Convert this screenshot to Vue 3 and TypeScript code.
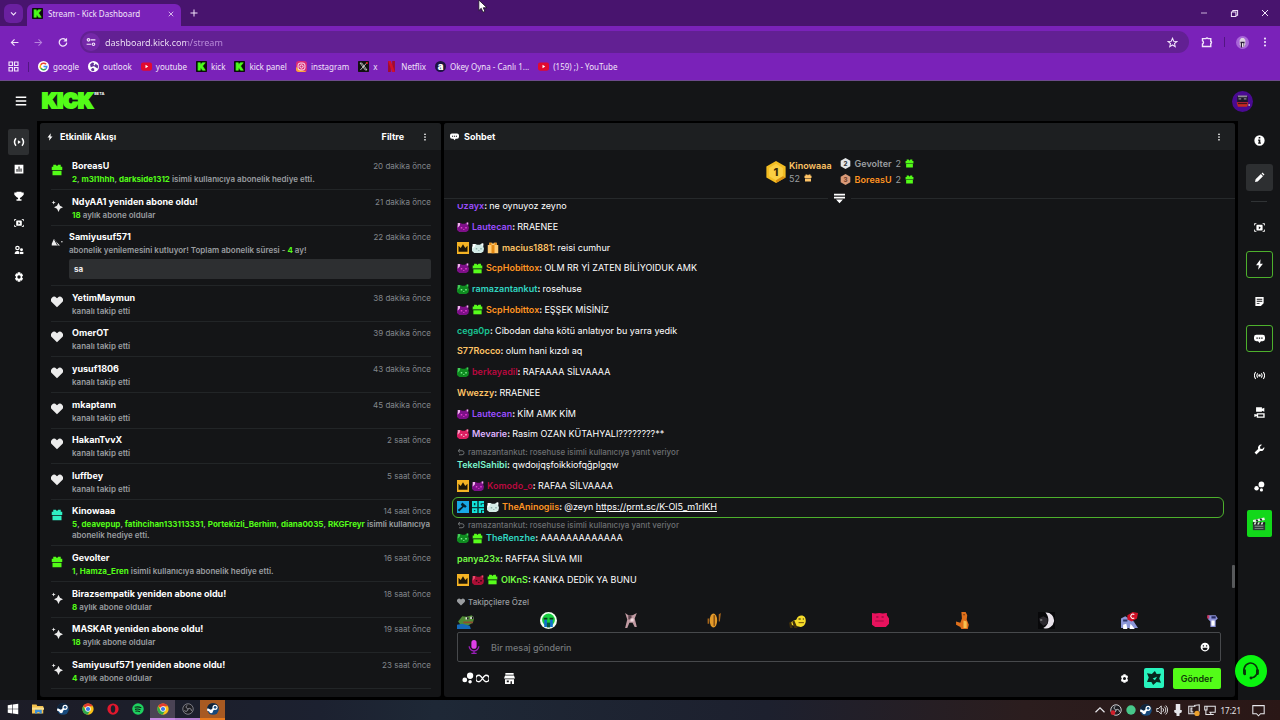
<script setup lang="ts">
import { defineComponent, h, ref } from 'vue'

const kickBadge =
  '<rect width="16" height="16" rx="1" fill="#0a0d0a"/><text x="8" y="13.2" text-anchor="middle" font-family="Inter, sans-serif" font-weight="900" font-size="14" fill="#4dfc1c" stroke="#4dfc1c" stroke-width="1.2">K</text>'

const steamMark =
  '<circle cx="8" cy="8" r="7.800" fill="#174a7c"/><path d="M.3 7A7.800 7.800 0 0 1 15.700 7L8 9z" fill="#10243c"/><path d="M.3 8.500 5.500 11 10.500 6" fill="none" stroke="#fff" stroke-width="3"/><circle cx="10.800" cy="5.800" r="3.400" fill="#fff"/><circle cx="10.800" cy="5.800" r="1.700" fill="#174a7c"/><circle cx="5.500" cy="11.200" r="2.300" fill="#fff"/>'

const chromeMark =
  '<circle cx="8" cy="8" r="7.500" fill="#fbc116"/><path d="M8 8 1.500 4.200A7.500 7.500 0 0 1 14.500 4.200H8z" fill="#e33b2e"/><path d="M1.500 4.200A7.500 7.500 0 0 0 7.500 15.500L11 9.700 8 8 4.700 9.700z" fill="#2da94f"/><circle cx="8" cy="8" r="3.700" fill="#fff"/><circle cx="8" cy="8" r="2.800" fill="#3b78e7"/>'

const cat = (body: string, light: string, eye: string): string =>
  `<path d="M1 2.500h4l1.500 1h4L13 2h2v4l1 3-1 4-3 1.500H3L0 12V7l1-2z" fill="${body}"/><path d="M1 2.500h3v3L1 9zM13 2h2v2.500h-2z" fill="${light}"/><path d="M5 8h2v2H5zM11 8h2v2h-2zM8 11h2v1H8z" fill="${eye}"/>`

const giftShape =
  '<path d="M3 1h3.500L8 3l1.500-2H13v2.500h2V8H1V3.500h2z"/><path d="M2 9h12v6H2z"/>'

const icons: Record<string, string> = {
  chevron: '<path d="M3.500 6 8 10.500 12.500 6" fill="none" stroke="currentColor" stroke-width="2"/>',
  up: '<path d="M2 11 8 5l6 6" fill="none" stroke="currentColor" stroke-width="1.600"/>',
  close: '<path d="m2 2 12 12M14 2 2 14" stroke="currentColor" stroke-width="2"/>',
  plus: '<path d="M8 1v14M1 8h14" stroke="currentColor" stroke-width="2"/>',
  minimize: '<path d="M2 8h12" stroke="currentColor" stroke-width="1.500"/>',
  restore: '<path d="M2.500 5.500h8v8h-8zM5 5V2.500h8.500V11H11" fill="none" stroke="currentColor" stroke-width="1.800"/>',
  back: '<path d="M15 8H2.500M8 2.500 2.500 8 8 13.500" fill="none" stroke="currentColor" stroke-width="2"/>',
  forward: '<path d="M1 8h12.500M8 2.500 13.500 8 8 13.500" fill="none" stroke="currentColor" stroke-width="1.800"/>',
  reload: '<path d="M13 5.200A6 6 0 1 0 14 9" fill="none" stroke="currentColor" stroke-width="2"/><path d="M14.500 1v6H8.500z" fill="currentColor"/>',
  tune: '<g fill="none" stroke="currentColor" stroke-width="1.800"><circle cx="4" cy="4.500" r="2"/><path d="M7.500 4.500H15M1 11.500h7.500"/><circle cx="12" cy="11.500" r="2"/></g>',
  star: '<path d="m8 1.800 1.800 4.300 4.700.4-3.600 3 1.100 4.600-4-2.500-4 2.500 1.100-4.600-3.600-3 4.700-.4z" fill="none" stroke="currentColor" stroke-width="1.500"/>',
  puzzle: '<path d="M2 3.500h4.500a1.800 1.800 0 0 1 3 0H13V7a1.800 1.800 0 0 1 0 3.200V14H2v-3.500a2.200 2.200 0 0 0 0-4z" fill="none" stroke="currentColor" stroke-width="1.900"/>',
  dots: '<circle cx="8" cy="2.500" r="1.700"/><circle cx="8" cy="8" r="1.700"/><circle cx="8" cy="13.500" r="1.700"/>',
  profile: '<circle cx="8" cy="8" r="8" fill="#a866d8"/><path d="M4.500 5 6.500 2.500h3l2 2.500v5l-1.500 3.500H6L4.500 10z" fill="#ddd3e0"/><path d="M5.500 7h5v2h-5zM6 9h1.500v5H6zM9 9h1v4H9z" fill="#2b1b38"/><path d="M7.500 9h1.500v4H7.500z" fill="#f3ecf5"/>',
  apps: '<path d="M1.500 1.500h5v5h-5zM9.500 1.500h5v5h-5zM1.500 9.500h5v5h-5zM9.500 9.500h5v5h-5z" fill="none" stroke="currentColor" stroke-width="1.700"/>',
  google: '<circle cx="8" cy="8" r="8" fill="#fff"/><g fill="none" stroke-width="2.200"><path d="M11.800 4.800A4.800 4.800 0 0 0 4 5.500" stroke="#ea4335"/><path d="M4 5.500a4.800 4.800 0 0 0 0 5" stroke="#fbbc05"/><path d="M4 10.500a4.800 4.800 0 0 0 7.300 1" stroke="#34a853"/><path d="M11.300 11.500A4.800 4.800 0 0 0 12.800 8H8" stroke="#4285f4"/></g>',
  outlook: '<circle cx="8" cy="8" r="8" fill="#fff"/><path d="M3 5l3-3 3 1-1 2 2 2-3 1-3 1zM11 4l4 3-1 4-3-2-2-1zM6 10l3 1v3l-2 1-3-2z" fill="#63319a"/>',
  youtube: '<rect y="2" width="16" height="12" rx="3" fill="#e3092f"/><path d="m6.500 5.500 4 2.500-4 2.500z" fill="#fff"/>',
  kick: kickBadge,
  instagram: '<rect width="16" height="16" rx="4" fill="#d92a78"/><path d="M0 8v4a4 4 0 0 0 4 4h8a4 4 0 0 0 3-1.400C8 14 2 12 0 8z" fill="#f8a43c"/><g fill="none" stroke="#fff" stroke-width="1.300"><rect x="3" y="3" width="10" height="10" rx="3"/><circle cx="8" cy="8" r="2.400"/></g>',
  x: '<rect width="16" height="16" rx="1" fill="#111"/><path d="M3 3h2.500l7.500 10h-2.500zM12.500 3 3.500 13" fill="none" stroke="#ddd" stroke-width="1.200"/><circle cx="13" cy="3" r="1.500" fill="#e22"/>',
  netflix: '<path d="M3 0h4v16H3zM9 0h4v16H9z" fill="#a30b2c"/><path d="M3 0h4l6 16H9z" fill="#d2102c"/>',
  okey: '<circle cx="8" cy="8" r="8" fill="#1d1442"/><text x="8" y="12.500" text-anchor="middle" font-family="Inter, sans-serif" font-weight="900" font-size="14" fill="#fff">a</text>',
  menu: '<path d="M1 3h14M1 8h14M1 13h14" stroke="currentColor" stroke-width="2"/>',
  avatar: '<circle cx="8" cy="8" r="8" fill="#4a0a92"/><path d="M4 4h8v4.500H4z" fill="#1b1728"/><path d="M4.500 3.500h7v1.200h-7zM5 5.500h2v1H5zM9 5.500h2v1H9z" fill="#8d8796"/><path d="M3.500 8.500h9l-1 3.500H4.500z" fill="#c52a1f"/><path d="M4.500 9.200h7v.8h-7z" fill="#3a1218"/><path d="M12.500 10h1.200v1.200h-1.200z" fill="#ccc"/>',
  bolt: '<path d="M9.500.5 3 9h4l-1 6.500L13 7H9z"/>',
  live: '<g fill="none" stroke="currentColor" stroke-width="2"><path d="M4 3a8 8 0 0 0 0 10M12 3a8 8 0 0 1 0 10"/></g><path d="m6.500 5.500 4 2.500-4 2.500z"/>',
  chart: '<path fill-rule="evenodd" d="M1 1h14v14H1zM4 8v4.500h1.700V8zM7.200 4v8.500h1.700V4zM10.400 7v5.500h1.700V7z"/>',
  trophy: '<path d="M4 1h8v1.500h3.500V6L12 9.500l-2.500 1.500v2H12v2.500H4V13h2.500v-2L4 9.500.5 6V2.500H4z"/>',
  capture: '<rect x="3.500" y="4" width="9" height="8.500" rx="1.500"/><path d="M.5 5V2.500h3M15.500 5V2.500h-3M.5 11v2.500h3M15.500 11v2.500h-3" fill="none" stroke="currentColor" stroke-width="1.400"/><path d="m7 6 3 2.200L7 10.500z" fill="#141517"/>',
  people: '<circle cx="5.500" cy="4.800" r="2.700" fill="none" stroke="currentColor" stroke-width="2"/><path d="M1 14.500c0-3.500 2-5 4.500-5 1.500 0 2.500.5 3 1.500v3.500z"/><circle cx="12" cy="7.500" r="2.300"/><path d="M9.500 14.500V11h5.500v3.500z"/>',
  gear: '<path fill-rule="evenodd" d="M6 .5h4l.4 2.200 2.100-.7 2 3.500L13 7v2l1.500 1.500-2 3.500-2.100-.7-.4 2.200H6l-.4-2.200-2.100.7-2-3.500L3 9V7L1.500 5.500l2-3.500 2.100.7zM8 5.300a2.700 2.700 0 1 0 0 5.400 2.700 2.700 0 0 0 0-5.400z"/>',
  gift: giftShape,
  sparkle: '<path d="M10 3.500 12 7.700 16 9.700 12 11.700 10 16 8 11.700 4 9.700 8 7.700zM3.500.5l.8 2 2 .8-2 .8-.8 2-.8-2-2-.8 2-.8z"/>',
  party: '<path d="M1 14v-2.500L4 5l3 4 5 5z"/><path d="m4.500 6 4.500 8" stroke="#141517" stroke-width="1.200"/><circle cx="14.500" cy="9" r="1"/>',
  heart: '<path d="M8 15 1.200 8.300a4.300 4.300 0 0 1 0-6 4.200 4.200 0 0 1 6 0l.8.8.8-.8a4.200 4.200 0 0 1 6 0 4.300 4.300 0 0 1 0 6z"/>',
  chat: '<path d="M3.500 2.500h9A3.500 3.500 0 0 1 16 6v2.500a3.500 3.500 0 0 1-3.500 3.500H10l-2 2.500L6 12H3.500A3.500 3.500 0 0 1 0 8.500V6a3.500 3.500 0 0 1 3.500-3.500z"/><path d="M3.500 6.500h2v2h-2zM7 6.500h2v2H7zM10.500 6.500h2v2h-2z" fill="#141517"/>',
  collapse: '<path d="M0 1h16v2.500H0zM0 5.500h16V8H0zM3 9.500h10L8 15z"/>',
  medal1: '<path d="M8 0l7 4v8l-7 4-7-4V4z" fill="#f3bd22"/><path d="M8 2l5 3v6l-5 3-5-3V5z" fill="#fbcf43"/><path d="M8 14l5-3 2 1-7 4z" fill="#d98f12"/><text x="8" y="11" text-anchor="middle" font-family="Inter, sans-serif" font-weight="800" font-size="8" fill="#3d2c08">1</text>',
  medal2: '<path d="M8 0l7 4v8l-7 4-7-4V4z" fill="#e3e5e7"/><text x="8" y="11.500" text-anchor="middle" font-family="Inter, sans-serif" font-weight="800" font-size="9" fill="#33373a">2</text>',
  medal3: '<path d="M8 0l7 4v8l-7 4-7-4V4z" fill="#d99a78"/><text x="8" y="11.500" text-anchor="middle" font-family="Inter, sans-serif" font-weight="800" font-size="9" fill="#70402a">3</text>',
  purpleCat: cat('#7d1088', '#f0b4ee', '#e33bd0'),
  whiteCat: cat('#d3ebe6', '#ffffff', '#8fb1ab'),
  greenCat: cat('#0f8a20', '#45cc5a', '#7bee8c'),
  pinkCat: cat('#dc1f62', '#f99ac1', '#ffc0d5'),
  redCat: cat('#a90f35', '#e8496c', '#2a0610'),
  crown: '<rect width="16" height="16" fill="#f5b323"/><path d="M2 5l3 3 3-5 3 5 3-3v8H2z" fill="#1b1508"/>',
  subGift: `<g fill="#57fc1c">${giftShape}</g><path d="M1 8h14v1H1z" fill="#1c6d10"/>`,
  goldGift: '<path d="M3 1h4l1 2 1-2h4v3h2v11H1V4h2z" fill="#ffca70"/><path d="M6 4h4v11H6zM3 1h3v3H3zM10 1h3v3h-3z" fill="#e58a14"/>',
  mod: '<rect width="16" height="16" fill="#18a8e8"/><path d="m7 2 6 5-2 2-2-1-6 6-2-2 6-5-2-2z" fill="#062232"/>',
  og: '<rect width="16" height="16" fill="#063b3d"/><path fill-rule="evenodd" d="M0 0h7v8H0zM2.500 2.500v3h2v-3zM9 0h7v3h-4.500v2.500H13V4h3v4H9zM0 9.500h7V16H0zM2.500 12v1.500h2V12zM9 9.500h7V12h-4v4H9zM13.500 13H16v3h-2.500z" fill="#13e6dc"/>',
  reply: '<path d="M6 2 2 5.500 6 9M2 5.500h8a4 4 0 0 1 0 8H4" fill="none" stroke="currentColor" stroke-width="2"/>',
  pepe: '<path d="M1 9 5 4l4 .5L14 3l2 3-1 4-5 3H4z" fill="#4f8b35"/><path d="M8 5h3v2H8zM12.500 4.500h3v2h-3z" fill="#dfe8d8"/><path d="M9.500 5H11v2H9.500zM14 4.500h1.500v2H14z" fill="#111"/><path d="M6 9h9v1.500H6z" fill="#8f4b32"/><path d="M0 12l5-1 7 2 1 3H0z" fill="#1569b8"/>',
  cry: '<circle cx="8" cy="8" r="8" fill="#f2fff0"/><circle cx="8" cy="7.500" r="6" fill="#16cf3f"/><path d="M4 7h2.500v7H4zM9.500 7H12v7H9.500z" fill="#126fd0"/><path d="M3.500 5.500h3.500V7H3.500zM9 5.500h3.500V7H9z" fill="#0b3d18"/><path d="M6.500 10h3v4.500h-3z" fill="#075b43"/>',
  catDance: '<path d="M2 1l3 2h4l4-2-2 5 2 8h-2l-2-4H6l-2 5H2l2-8z" fill="#c09aa2"/><path d="M5 3h3v4H5z" fill="#5b424b"/><path d="M7 6h3v3H7z" fill="#f3dce1"/>',
  coin: '<ellipse cx="7" cy="8" rx="3.500" ry="6.500" fill="#e29a29"/><path d="M7 3h1.500v10H7z" fill="#8a5214"/><path d="M1.500 6H3v5H1.500zM12 2l2-1-1 8h-1z" fill="#a7651a"/>',
  bee: '<path d="M1 12c0-3 4-4 6-5 1-4 6-5 8-2 2 4 0 9-4 9z" fill="#f6dc2a"/><path d="M3 9l2-1 3 7H5zM0 10l2-1 1.500 6H1z" fill="#40300b"/><path d="M9 6h2v1H9zM13 6h1v1h-1z" fill="#111"/><path d="M9 9.500h5v1H9z" fill="#7a5a0a"/>',
  pinkBlob: '<path d="M0 1l3 .5L7 1l3 .5L14 1v2l2 3v5l-3 3H3l-3-2z" fill="#e8125d"/><path d="M4 4h2v1.500H4zM9 4h2v1.500H9zM3 8h8v1H3z" fill="#9c0a42"/>',
  lizard: '<path d="M6 0h4l1.500 3-.5 4 2 5-1 4H6l-1-2-4-2V9l4 1 1.500-4z" fill="#e0701b"/><path d="M8 8l3 1v6H8z" fill="#f8c150"/><path d="M8 2h1v1H8z" fill="#301404"/>',
  moon: '<path d="M0 0h16v16H0z" fill="#08080a"/><path d="M7 .5a7.500 7.500 0 1 1-2 14.500C11 12 11 5 7 .5z" fill="#e8e2ea"/><path d="M1 6l4-2 4 2v5l-4 2-3-3z" fill="#2b282e"/><path d="M2 7h2v1H2z" fill="#aaa"/>',
  fan: '<path d="M0 6l4-2 8 5 4 6H0z" fill="#8c97d8"/><path d="M6 3l5-3 5 1-1 5-5 3-4-2z" fill="#cf1026"/><path d="M12.500 2.500a2 2 0 1 0 0 3" fill="none" stroke="#fff"/><path d="M2 12l3-1 1 5H2zM9 11l4 5H8z" fill="#fff"/><path d="M2 7h4v2H2z" fill="#2c3566"/>',
  robot: '<path d="M4 3h7l2 3-2 2v6H6V9L4 7z" fill="#8d92d8"/><path d="M7 8h3v5H7z" fill="#fff"/><path d="M3 3h2v3H3z" fill="#d03a68"/><path d="M7 4h4v2H7z" fill="#272b63"/>',
  mic: '<rect x="5" y="0" width="6" height="10" rx="3" fill="#df3fe8"/><path d="M2.500 7a5.500 5.500 0 0 0 11 0M8 12.500V15M5 15.300h6" fill="none" stroke="#9a1fb8" stroke-width="1.500"/>',
  smile: '<circle cx="8" cy="8" r="7"/><path d="M4.500 5h2v2h-2zM9.500 5h2v2h-2zM4 9h8a4 4 0 0 1-8 0z" fill="#141517"/>',
  points: '<circle cx="10.800" cy="5" r="4.200"/><circle cx="3.700" cy="10.500" r="3.200"/><circle cx="10.800" cy="13" r="2.300"/>',
  infinity: '<path d="M8 8C6 5 5 4 3.800 4a4 4 0 0 0 0 8C5 12 6 11 8 8s3-4 4.200-4a4 4 0 0 1 0 8C11 12 10 11 8 8z" fill="none" stroke="currentColor" stroke-width="1.600"/>',
  shop: '<path d="M2 0h12v2.500H2zM1.500 3.500h13L16 8H0z"/><path fill-rule="evenodd" d="M1.500 9h13v7h-3v-4H9.500v4h-8zM4 11v2.500h3V11z"/>',
  kicks: '<path d="M9 0l2 3.500L16 3l-2 5.500 2 5-5-1L7 16l-2-3.500L0 12.500 2 7.500 0 2.500l5.500 1z" fill="#07291f"/><path d="m6.500 8.500 5-2-2.500 4z" fill="#28f4be"/>',
  info: '<path fill-rule="evenodd" d="M8 .5a7.500 7.500 0 1 0 0 15 7.500 7.500 0 0 0 0-15zM6.800 3h2.400v2.200H6.800zM6 6.500h3.200V11H10v1.800H6V11h.8V8.200H6z"/>',
  pencil: '<path d="m1.500 14.500.8-4L10 3l3 3-7.600 7.700zM11 2l1.300-1.200 2.900 2.900L14 5z"/>',
  note: '<path fill-rule="evenodd" d="M2 1.500h12v9l-4 4H2zM4 4v1.300h8V4zM4 7v1.300h8V7zM4 10v1.300h4V10z"/>',
  signal: '<circle cx="8" cy="8" r="1.800"/><path d="M5.500 5a4.500 4.500 0 0 0 0 6M10.500 5a4.500 4.500 0 0 1 0 6M2.500 3a8 8 0 0 0 0 10M13.500 3a8 8 0 0 1 0 10" fill="none" stroke="currentColor" stroke-width="1.500"/>',
  cameras: '<path d="M3 .5h8.500v2L15 1v6l-3.500-1.500V7H3z"/><path fill-rule="evenodd" d="M4 9h11.500v6.500H4V13L.5 14.500V10L4 11zM6 10.800v2.900h7.500v-2.900z"/>',
  wrench: '<path d="M15 4.500 12 7.300 9.200 6.800 8.700 4 11.500 1A4.800 4.800 0 0 0 6 7.300L.8 12.500l2.700 2.700L8.700 10A4.800 4.800 0 0 0 15 4.500z"/>',
  clapper: '<path d="M1 6h14v9H1z" fill="#30383a"/><path d="M1 3.500 14 .5l.7 2.800L1.500 6z" fill="#e8f5e6"/><path d="m4 3 2-.5L7.500 5l-2 .4zM8.500 1.900l2-.5L12 4l-2 .4z" fill="#1b2320"/><path d="M1 6h14v2.500H1z" fill="#1a211e"/><path d="M3 6h2L4 8.500H2zM7 6h2L8 8.500H6zM11 6h2l-1 2.500h-2z" fill="#dbeed8"/><path d="M3 10h10v1H3zM3 12.500h10v1H3z" fill="#87968e"/>',
  headset: '<path d="M3 11.500A6 6.500 0 1 1 13.500 9c-.2 2.500-2 4.300-4.500 5" fill="none" stroke="#08340a" stroke-width="1.500"/><rect x="1" y="6.500" width="2.500" height="5" rx="1" fill="#08340a"/><rect x="12.500" y="6.500" width="2.500" height="5" rx="1" fill="#08340a"/><circle cx="8" cy="14.200" r="1.300" fill="#08340a"/>',
  windows: '<path d="M1 3l6-1v5.700H1zM7.800 1.900 15 1v6.700H7.800zM1 8.400h6V14l-6-1zM7.800 8.400H15V15l-7.200-1z" fill="#fff"/>',
  folder: '<path d="M0 2h6l1 2h8v10H0z" fill="#f3c04c"/><path d="M0 6h16v3H0z" fill="#fbe08d"/><path d="M4 9h9v5h-3v-2H7v2H4z" fill="#3c8fd6"/>',
  steam: steamMark,
  chrome: chromeMark,
  opera: '<path fill-rule="evenodd" d="M8 .5a7.500 7.500 0 1 0 0 15 7.500 7.500 0 0 0 0-15zm0 2.500c2 0 3 2.200 3 5s-1 5-3 5-3-2.200-3-5 1-5 3-5z" fill="#e0182d"/>',
  spotify: '<circle cx="8" cy="8" r="7.700" fill="#1ed05f"/><path d="M3.500 5.800c3-1 6.500-.7 9 .7M4 8.500c2.500-.8 5.500-.5 7.500.7M4.500 11c2-.5 4.500-.3 6 .6" fill="none" stroke="#0b2413" stroke-width="1.400"/>',
  obs: '<circle cx="8" cy="8" r="7" fill="#1d1d22" stroke="#9a9aa2" stroke-width="1"/><path d="M8 8c-3-1-3-4-1-5M8 8c2-2 5 0 4.500 2.500M8 8c0 3-3 4-5 2" fill="none" stroke="#9a9aa2" stroke-width="1.300"/>',
  obsRec: '<circle cx="8" cy="8" r="7" fill="#1d1d22" stroke="#cfcfd4" stroke-width="1.300"/><path d="M8 8c-3-1-3-4-1-5M8 8c2-2 5 0 4.500 2.500M8 8c0 3-3 4-5 2" fill="none" stroke="#cfcfd4" stroke-width="1.300"/><circle cx="4" cy="11.500" r="3.200" fill="#d01f2a"/>',
  greenDot: '<circle cx="8" cy="8" r="7.500" fill="#48c78a"/>',
  speaker: '<path d="M1 6h2.500L7 2.500v11L3.500 10H1zM9 5.500a3.500 3.500 0 0 1 0 5M11 3.500a6 6 0 0 1 0 9M13 2a8.500 8.500 0 0 1 0 12" fill="none" stroke="currentColor" stroke-width="1.200"/>',
  trayMic: '<path d="M5 0h6v9H5zM3 8h10v3l-3 1.500V16H6v-3.500L3 11z"/>',
  update: '<path d="M10 3H1v10h9M6 5.500H4v5h3M6 8H4M8 2l7-1v9" fill="none" stroke="currentColor" stroke-width="1.400"/><circle cx="12" cy="12.500" r="3.500" fill="#eda02c"/>',
  network: '<path d="M4 3h11v8H7M1 3h3v5H1zM2.500 8v6H6M9 11v3M6 14h7" fill="none" stroke="currentColor" stroke-width="1.400"/>',
  notify: '<path d="M1 2h14v10H10.500L8 14.500 5.500 12H1z" fill="none" stroke="currentColor" stroke-width="1.300"/>',
  cursor: '<path d="M1 0v13l3-2.800L6 15l2.500-1L6.500 9.500H11z" fill="#fff" stroke="#1a1022" stroke-width="1"/>',
}

const Icon = defineComponent({
  props: { name: { type: String, required: true }, size: { type: Number, default: 12 } },
  setup: (p) => () =>
    h('svg', {
      class: 'icon',
      viewBox: '0 0 16 16',
      width: p.size,
      height: p.size,
      fill: 'currentColor',
      'aria-hidden': 'true',
      innerHTML: icons[p.name],
    }),
})

interface Bookmark { icon: string; label: string }
const bookmarks: Bookmark[] = [
  { icon: 'google', label: 'google' },
  { icon: 'outlook', label: 'outlook' },
  { icon: 'youtube', label: 'youtube' },
  { icon: 'kick', label: 'kick' },
  { icon: 'kick', label: 'kick panel' },
  { icon: 'instagram', label: 'instagram' },
  { icon: 'x', label: 'x' },
  { icon: 'netflix', label: 'Netflix' },
  { icon: 'okey', label: 'Okey Oyna - Canlı 1...' },
  { icon: 'youtube', label: '(159) ;) - YouTube' },
]

interface Activity {
  icon: string
  tone?: string
  title: string
  time: string
  pre?: string
  marks?: string[]
  text: string
  note?: string
}
const follow = (title: string, time: string): Activity => ({ icon: 'heart', title, time, text: 'kanalı takip etti' })
const renew = (user: string, months: number, time: string): Activity => ({
  icon: 'sparkle',
  title: `${user} yeniden abone oldu!`,
  time,
  marks: [String(months)],
  text: ' aylık abone oldular',
})
const gifted = ' isimli kullanıcıya abonelik hediye etti.'
const activities: Activity[] = [
  { icon: 'gift', tone: 'green', title: 'BoreasU', time: '20 dakika önce', marks: ['2', 'm3l1hhh', 'darkside1312'], text: gifted },
  renew('NdyAA1', 18, '21 dakika önce'),
  {
    icon: 'party', tone: 'celebrate', title: 'Samiyusuf571', time: '22 dakika önce',
    pre: 'abonelik yenilemesini kutluyor! Toplam abonelik süresi - ', marks: ['4'], text: ' ay!', note: 'sa',
  },
  follow('YetimMaymun', '38 dakika önce'),
  follow('OmerOT', '39 dakika önce'),
  follow('yusuf1806', '43 dakika önce'),
  follow('mkaptann', '45 dakika önce'),
  follow('HakanTvvX', '2 saat önce'),
  follow('luffbey', '5 saat önce'),
  {
    icon: 'gift', tone: 'teal', title: 'Kinowaaa', time: '14 saat önce',
    marks: ['5', 'deavepup', 'fatihcihan133113331', 'Portekizli_Berhim', 'diana0035', 'RKGFreyr'], text: gifted,
  },
  { icon: 'gift', tone: 'green', title: 'Gevolter', time: '16 saat önce', marks: ['1', 'Hamza_Eren'], text: gifted },
  renew('Birazsempatik', 8, '18 saat önce'),
  renew('MASKAR', 18, '19 saat önce'),
  renew('Samiyusuf571', 4, '23 saat önce'),
]

interface Message { user: string; tone: string; text: string; badges?: string[]; reply?: string; link?: string }
const replied = 'ramazantankut: rosehuse isimli kullanıcıya yanıt veriyor'
const messages: Message[] = [
  { user: 'Uzayx', tone: 'violet', text: 'ne oynuyoz zeyno' },
  { user: 'Lautecan', tone: 'violet', text: 'RRAENEE', badges: ['purpleCat'] },
  { user: 'macius1881', tone: 'sand', text: 'reisi cumhur', badges: ['crown', 'whiteCat', 'goldGift'] },
  { user: 'ScpHobittox', tone: 'orange', text: 'OLM RR Yİ ZATEN BİLİYOIDUK AMK', badges: ['purpleCat', 'subGift'] },
  { user: 'ramazantankut', tone: 'teal', text: 'rosehuse', badges: ['greenCat'] },
  { user: 'ScpHobittox', tone: 'orange', text: 'EŞŞEK MİSİNİZ', badges: ['purpleCat', 'subGift'] },
  { user: 'cega0p', tone: 'jade', text: 'Cibodan daha kötü anlatıyor bu yarra yedik' },
  { user: 'S77Rocco', tone: 'sand', text: 'olum hani kızdı aq' },
  { user: 'berkayadil', tone: 'crimson', text: 'RAFAAAA SİLVAAAA', badges: ['greenCat'] },
  { user: 'Wwezzy', tone: 'sand', text: 'RRAENEE' },
  { user: 'Lautecan', tone: 'violet', text: 'KİM AMK KİM', badges: ['purpleCat'] },
  { user: 'Mevarie', tone: 'lilac', text: 'Rasim OZAN KÜTAHYALI????????**', badges: ['pinkCat'] },
  { user: 'TekelSahibi', tone: 'mint', text: 'qwdoıjqşfoikkiofqğplgqw', reply: replied },
  { user: 'Komodo_o', tone: 'crimson', text: 'RAFAA SİLVAAAA', badges: ['crown', 'purpleCat'] },
  { user: 'TheAninogiis', tone: 'orange', text: '@zeyn ', link: 'https://prnt.sc/K-Ol5_m1rlKH', badges: ['mod', 'og', 'whiteCat'] },
  { user: 'TheRenzhe', tone: 'teal', text: 'AAAAAAAAAAAAA', badges: ['greenCat', 'subGift'], reply: replied },
  { user: 'panya23x', tone: 'lime', text: 'RAFFAA SİLVA MII' },
  { user: 'OlKnS', tone: 'lime', text: 'KANKA DEDİK YA BUNU', badges: ['crown', 'redCat', 'subGift'] },
]

const emotes: string[] = ['pepe', 'cry', 'catDance', 'coin', 'bee', 'pinkBlob', 'lizard', 'moon', 'fan', 'robot']

const sideLinks = [
  { icon: 'live', label: 'Yayın' },
  { icon: 'chart', label: 'Analiz' },
  { icon: 'trophy', label: 'Başarılar' },
  { icon: 'capture', label: 'Klipler' },
  { icon: 'people', label: 'Topluluk' },
  { icon: 'gear', label: 'Ayarlar' },
]
const tools = [
  { icon: 'capture', label: 'Önizleme', kind: '' },
  { icon: 'bolt', label: 'Etkinlik akışı', kind: 'on' },
  { icon: 'note', label: 'Notlar', kind: '' },
  { icon: 'chat', label: 'Sohbet', kind: 'on' },
  { icon: 'signal', label: 'Yayın durumu', kind: '' },
  { icon: 'cameras', label: 'Kameralar', kind: '' },
  { icon: 'wrench', label: 'Moderasyon', kind: '' },
  { icon: 'points', label: 'Puanlar', kind: '' },
  { icon: 'clapper', label: 'Klip oluştur', kind: 'clip' },
]
const taskApps = [
  { icon: 'windows', state: '' },
  { icon: 'folder', state: '' },
  { icon: 'steam', state: '' },
  { icon: 'chrome', state: '' },
  { icon: 'opera', state: '' },
  { icon: 'spotify', state: '' },
  { icon: 'chrome', state: 'active' },
  { icon: 'obs', state: 'open' },
  { icon: 'steam', state: 'alert' },
]
const tray = ['up', 'obsRec', 'greenDot', 'steam', 'speaker', 'trayMic', 'update', 'network']

const address = ref('dashboard.kick.com/stream')
const draft = ref('')
</script>

<template>
  <div class="desktop">
    <header class="browser">
      <div class="tabstrip">
        <button class="tab-search" aria-label="Sekmelerde ara"><Icon name="chevron" :size="9" /></button>
        <div class="tab">
          <Icon name="kick" :size="11" />
          <span class="tab-title">Stream - Kick Dashboard</span>
          <button aria-label="Sekmeyi kapat"><Icon name="close" :size="6" /></button>
        </div>
        <button class="new-tab" aria-label="Yeni sekme"><Icon name="plus" :size="8" /></button>
        <div class="window-controls">
          <button aria-label="Küçült"><Icon name="minimize" :size="8" /></button>
          <button aria-label="Geri yükle"><Icon name="restore" :size="9" /></button>
          <button aria-label="Kapat"><Icon name="close" :size="8" /></button>
        </div>
      </div>
      <div class="toolbar">
        <div class="nav-buttons">
          <button aria-label="Geri"><Icon name="back" :size="9" /></button>
          <button class="dim" aria-label="İleri"><Icon name="forward" :size="9" /></button>
          <button aria-label="Yenile"><Icon name="reload" :size="10" /></button>
        </div>
        <div class="address">
          <button class="site-info" aria-label="Site bilgileri"><Icon name="tune" :size="10" /></button>
          <input v-model="address" type="text" aria-label="Adres" />
          <button aria-label="Yer işareti ekle"><Icon name="star" :size="11" /></button>
        </div>
        <div class="toolbar-end">
          <button aria-label="Uzantılar"><Icon name="puzzle" :size="12" /></button>
          <span class="bar" />
          <button aria-label="Profil"><Icon name="profile" :size="13" /></button>
          <button aria-label="Menü"><Icon name="dots" :size="10" /></button>
        </div>
      </div>
      <nav class="bookmarks" aria-label="Yer işaretleri">
        <button aria-label="Uygulamalar"><Icon name="apps" :size="11" /></button>
        <span class="bar" />
        <a v-for="b in bookmarks" :key="b.label" href="#"><Icon :name="b.icon" :size="11" />{{ b.label }}</a>
      </nav>
    </header>

    <div class="app">
      <header class="app-header">
        <button aria-label="Menüyü aç"><Icon name="menu" :size="12" /></button>
        <a class="logo" href="#"><span class="wordmark">KICK</span><sup>BETA</sup></a>
        <button class="account" aria-label="Hesap"><Icon name="avatar" :size="21" /></button>
      </header>

      <div class="workspace">
        <nav class="side" aria-label="Panel">
          <a v-for="(s, i) in sideLinks" :key="s.icon" href="#" :aria-label="s.label" :class="{ current: i === 0 }">
            <Icon :name="s.icon" :size="i === 0 ? 12 : 10" />
          </a>
        </nav>

        <section class="panel activity">
          <header class="panel-head">
            <Icon name="bolt" :size="8" />
            <h2>Etkinlik Akışı</h2>
            <button class="filter">Filtre</button>
            <button aria-label="Diğer"><Icon name="dots" :size="8" /></button>
          </header>
          <ul class="feed">
            <li v-for="a in activities" :key="a.title" :class="a.tone">
              <Icon :name="a.icon" :size="12" />
              <div class="feed-body">
                <div class="feed-top"><h3>{{ a.title }}</h3><time>{{ a.time }}</time></div>
                <p>{{ a.pre }}<template v-for="(m, i) in a.marks" :key="m"><template v-if="i">, </template><b>{{ m }}</b></template>{{ a.text }}</p>
                <div v-if="a.note" class="note">{{ a.note }}</div>
              </div>
            </li>
          </ul>
        </section>

        <section class="panel chat">
          <header class="panel-head">
            <Icon name="chat" :size="9" />
            <h2>Sohbet</h2>
            <button class="push" aria-label="Diğer"><Icon name="dots" :size="8" /></button>
          </header>

          <div class="leaders">
            <div class="first">
              <Icon name="medal1" :size="22" />
              <div>
                <strong>Kinowaaa</strong>
                <span class="count gold">52 <Icon name="gift" :size="8" /></span>
              </div>
            </div>
            <div class="others">
              <span><Icon name="medal2" :size="11" /><b>Gevolter</b> 2 <Icon class="gift" name="gift" :size="9" /></span>
              <span><Icon name="medal3" :size="11" /><b class="orange">BoreasU</b> 2 <Icon class="gift" name="gift" :size="9" /></span>
            </div>
          </div>
          <div class="fold">
            <button aria-label="Sıralamayı aç"><Icon name="collapse" :size="11" /></button>
          </div>

          <div class="scroller">
            <ol class="messages">
              <li v-for="(m, i) in messages" :key="i" :class="{ pinned: m.link }">
                <div v-if="m.reply" class="reply"><Icon name="reply" :size="8" />{{ m.reply }}</div>
                <div class="line">
                  <Icon v-for="(b, j) in m.badges" :key="j" :name="b" :size="b === 'subGift' ? 11 : 12" />
                  <p><b :class="m.tone">{{ m.user }}</b><i>: </i>{{ m.text }}<a v-if="m.link" href="#">{{ m.link }}</a></p>
                </div>
              </li>
            </ol>
            <span class="thumb" />
          </div>

          <form class="composer" @submit.prevent>
            <p class="mode"><Icon name="heart" :size="8" />Takipçilere Özel</p>
            <div class="emotes">
              <button v-for="e in emotes" :key="e" type="button" :aria-label="e"><Icon :name="e" :size="17" /></button>
            </div>
            <div class="field">
              <Icon name="mic" :size="14" />
              <input v-model="draft" type="text" placeholder="Bir mesaj gönderin" aria-label="Bir mesaj gönderin" />
              <button type="button" aria-label="İfadeler"><Icon name="smile" :size="10" /></button>
            </div>
            <div class="actions">
              <button type="button" aria-label="Puanlar"><Icon name="points" :size="12" /><Icon name="infinity" :size="13" /></button>
              <button type="button" aria-label="Mağaza"><Icon name="shop" :size="11" /></button>
              <button type="button" class="push" aria-label="Sohbet ayarları"><Icon name="gear" :size="9" /></button>
              <button type="button" class="kicks" aria-label="Kicks"><Icon name="kicks" :size="14" /></button>
              <button type="submit" class="send">Gönder</button>
            </div>
          </form>
        </section>

        <aside class="tools" aria-label="Araçlar">
          <button aria-label="Bilgi"><Icon name="info" :size="11" /></button>
          <button class="shaded" aria-label="Düzenle"><Icon name="pencil" :size="11" /></button>
          <hr />
          <button v-for="t in tools" :key="t.icon" :class="t.kind" :aria-label="t.label">
            <Icon :name="t.icon" :size="t.kind === 'clip' ? 14 : 11" />
          </button>
        </aside>
      </div>
      <button class="support" aria-label="Destek"><Icon name="headset" :size="18" /></button>
    </div>

    <footer class="taskbar">
      <button v-for="(t, i) in taskApps" :key="i" :class="t.state" :aria-label="t.icon"><Icon :name="t.icon" :size="12" /></button>
      <div class="tray">
        <Icon v-for="t in tray" :key="t" :name="t" :size="t === 'greenDot' ? 10 : 12" />
        <time>17:21</time>
        <button aria-label="Bildirimler"><Icon name="notify" :size="13" /></button>
      </div>
    </footer>
    <Icon class="cursor" name="cursor" :size="13" />
  </div>
</template>

<style>
html,
body {
  margin: 0;
  background: #000;
}
</style>

<style scoped>
.desktop {
  position: relative;
  display: flex;
  flex-direction: column;
  height: 100vh;
  overflow: hidden;
  color: #fff;
  font-family: Inter, "Liberation Sans", sans-serif;
  font-size: 9px;
}
h2, h3, p, ul, ol { margin: 0; padding: 0; list-style: none; }
button {
  display: flex;
  align-items: center;
  justify-content: center;
  padding: 0;
  border: 0;
  background: none;
  color: inherit;
  font: inherit;
}
a { color: inherit; text-decoration: none; }
.icon { flex: none; display: block; }
.push { margin-left: auto; }

.browser {
  background: #7a22b9;
  color: #f1e4fa;
  font-family: "Noto Sans", "Open Sans", sans-serif;
  border-bottom: 1px solid #6d4a8c;
}
.tabstrip { display: flex; height: 26px; background: #48146e; }
.tab-search {
  width: 19px;
  height: 19px;
  margin: 4px 4px 0;
  border-radius: 6px;
  background: #6a20a0;
}
.tab {
  display: flex;
  align-items: center;
  gap: 5px;
  width: 142px;
  margin-top: 4px;
  padding: 0 7px 3px 5px;
  border-radius: 6px 6px 0 0;
  background: #7a22b9;
}
.tab-title { flex: 1; font-size: 8px; }
.new-tab { width: 26px; }
.window-controls { display: flex; gap: 22px; margin-left: auto; padding-right: 11px; }
.toolbar { display: flex; align-items: center; padding: 5px 10px 0; }
.nav-buttons { display: flex; gap: 15px; width: 70px; }
.dim { color: #b780de; }
.address {
  flex: 1;
  display: flex;
  align-items: center;
  height: 22px;
  padding: 0 11px 0 2px;
  border-radius: 11px;
  background: #622093;
}
.site-info { width: 18px; height: 18px; border-radius: 9px; background: #7428a8; }
.address input {
  flex: 1;
  padding: 0 0 0 5px;
  border: 0;
  outline: 0;
  font: 9px "Noto Sans", sans-serif;
  color: transparent;
  background: linear-gradient(90deg, #f6eefb 86px, #bf93df 86px);
  background-clip: text;
  -webkit-background-clip: text;
}
.toolbar-end { display: flex; align-items: center; gap: 11px; padding-left: 12px; }
.bar { width: 1px; height: 10px; background: #521682; }
.bookmarks { display: flex; align-items: center; gap: 9px; height: 27px; padding: 0 8px; font-size: 8px; }
.bookmarks a { display: flex; align-items: center; gap: 4px; white-space: nowrap; }

.app { position: relative; flex: 1; min-height: 0; display: flex; flex-direction: column; background: #141517; }
.app-header { display: flex; align-items: center; gap: 15px; height: 40px; padding: 0 27px 0 15px; }
.logo { display: flex; align-items: flex-start; color: #53fc18; }
.wordmark { font-size: 20px; line-height: 22px; font-weight: 900; -webkit-text-stroke: 2px #53fc18; }
.logo sup { margin-left: 1px; font-size: 4px; line-height: 8px; font-weight: 700; color: #fff; }
.account { margin-left: auto; }

.workspace {
  flex: 1;
  min-height: 0;
  display: grid;
  grid-template-columns: 37px minmax(0, 401fr) minmax(0, 791fr) 42px;
  gap: 3px;
  padding: 2px 0 3px;
  background: #000;
}
.side, .tools { display: flex; flex-direction: column; align-items: center; margin: -2px 0 -3px; background: #141517; }
.side { gap: 1px; padding-top: 8px; }
.side a { display: grid; place-items: center; width: 21px; height: 26px; border-radius: 2px; }
.side .current { background: #2d2f31; }

.panel { display: flex; flex-direction: column; min-width: 0; min-height: 0; background: #141517; border-radius: 3px; overflow: hidden; }
.panel-head { flex: none; display: flex; align-items: center; gap: 6px; height: 27px; padding: 0 12px 0 6px; background: #1d1f21; }
.chat .panel-head { gap: 5px; }
.panel-head h2 { font-size: 9px; line-height: 14px; font-weight: 700; }
.filter { margin-left: auto; padding-right: 11px; font-weight: 700; }

.feed { flex: 1; min-height: 0; display: flex; flex-direction: column; justify-content: space-between; padding: 5px 10px 8px 11px; }
.feed li { display: flex; gap: 9px; padding: 4px 0; border-bottom: 1px solid #222527; color: #ececec; }
.feed li > .icon { margin-top: 5px; }
.feed .celebrate { gap: 6px; }
.feed .green > .icon { color: #53fc18; }
.feed .teal > .icon { color: #2ff0c4; }
.feed-body { flex: 1; min-width: 0; }
.feed-top { display: flex; justify-content: space-between; align-items: center; height: 14px; }
.feed h3 { font-size: 9px; line-height: 14px; font-weight: 700; color: #fff; }
.feed time { font-size: 8px; color: #82868b; }
.feed p { margin-top: 1px; font-size: 8px; line-height: 11px; font-weight: 600; color: #9a9da0; }
.feed b { color: #53fc18; font-weight: 700; }
.note { margin: 3px 0 2px; padding: 0 5px; border-radius: 2px; background: #2d2f31; font-size: 8px; line-height: 20px; font-weight: 700; }

.leaders { flex: none; display: flex; justify-content: center; gap: 8px; height: 43px; align-items: center; font-size: 9px; color: #9a9da0; }
.first { display: flex; align-items: center; gap: 2px; }
.first strong { display: block; line-height: 13px; font-weight: 600; color: #ffc466; }
.count { display: flex; align-items: center; gap: 4px; line-height: 13px; }
.gold .icon { color: #ffc466; }
.others { display: grid; gap: 2px; }
.others span { display: flex; align-items: center; gap: 4px; line-height: 14px; }
.others b { font-weight: 600; }
.gift { color: #53fc18; }
.fold { flex: none; display: flex; align-items: center; gap: 6px; height: 11px; }
.fold::before, .fold::after { content: ""; flex: 1; height: 1px; background: #26292b; }

.scroller { position: relative; flex: 1; min-height: 0; display: flex; overflow: hidden; }
.messages { flex: 1; display: flex; flex-direction: column; justify-content: space-between; margin-top: -8px; padding: 0 11px 0 8px; }
.messages li { padding: 0 5px; }
.line { display: flex; align-items: center; gap: 3px; height: 20px; }
.line p { line-height: 14px; font-size: 9px; font-weight: 400; white-space: nowrap; color: #fff; }
.line b { font-weight: 600; }
.line i { font-style: normal; font-weight: 600; }
.line a { text-decoration: underline; }
.pinned .line { height: 19px; }
.messages .pinned { padding: 0 5px 0 4px; border: 1px solid #4db02c; border-radius: 6px; }
.reply { display: flex; align-items: center; gap: 3px; height: 10px; margin: 2px 0 -2px; font-size: 8px; font-weight: 500; color: #6c6f72; }
.thumb { position: absolute; right: 0; bottom: 2px; width: 3px; height: 23px; border-radius: 1px; background: #57595b; }
.violet { color: #9b4dff; }
.sand { color: #ffc466; }
.orange { color: #ff9422; }
.teal { color: #31d6c2; }
.jade { color: #19c493; }
.crimson { color: #b8093f; }
.lilac { color: #deb2ff; }
.mint { color: #7df5cf; }
.lime { color: #75fd46; }

.composer { flex: none; padding: 5px 14px 8px 13px; }
.mode { display: flex; align-items: center; gap: 3px; height: 14px; font-size: 8px; font-weight: 500; color: #9a9da0; }
.emotes { display: flex; justify-content: space-between; margin: 3px 0 3px; }
.field { display: flex; align-items: center; height: 28px; padding: 0 10px 0 9px; border: 1px solid #47494c; border-radius: 2px; }
.field input { flex: 1; min-width: 0; padding: 0 10px; border: 0; outline: 0; background: none; color: #fff; font: 500 9px Inter, sans-serif; }
.field input::placeholder { color: #76797c; }
.actions { display: flex; align-items: center; height: 22px; margin-top: 5px; padding-left: 5px; gap: 15px; }
.actions button { gap: 2px; }
.actions .kicks { width: 20px; height: 20px; border-radius: 2px; background: #28f4be; }
.actions .send { height: 21px; margin-left: -6px; padding: 0 8px; border-radius: 2px; background: #53fc18; color: #103a08; font-size: 9px; font-weight: 600; }

.tools { gap: 10px; padding-top: 6px; }
.tools button { flex: none; width: 25px; height: 25px; border: 1px solid transparent; border-radius: 3px; box-sizing: content-box; }
.tools .shaded { background: #2d2f31; }
.tools .on { border-color: #4db02c; }
.tools .clip { width: 23px; background: #12d81a; border-radius: 2px; }
.tools hr { flex: none; width: 16px; height: 1px; margin: 0 0 2px; border: 0; background: #303335; }
.support { position: absolute; right: 13px; bottom: 13px; width: 32px; height: 32px; border-radius: 16px; background: #0af50f; }

.taskbar {
  flex: none;
  display: flex;
  height: 20px;
  background: linear-gradient(90deg, #1c1c26, #1c2130 25%, #1e2836 34%, #1d202e 60%, #2b1d1e 80%, #2a1716);
  font-family: "Noto Sans", sans-serif;
}
.taskbar > button { width: 25px; border-bottom: 2px solid transparent; box-sizing: border-box; }
.taskbar > .active { background: #4a4354; border-color: #c68ae0; }
.taskbar > .open { border-color: #b57fd0; }
.taskbar > .alert { background: #a85a22; border-color: #e87a1c; }
.tray { display: flex; align-items: center; gap: 4px; margin-left: auto; padding-right: 15px; color: #e6e6ea; }
.tray time { margin: 0 7px 0 1px; font-size: 8px; }
.cursor { position: absolute; left: 478px; top: 0; }
</style>
